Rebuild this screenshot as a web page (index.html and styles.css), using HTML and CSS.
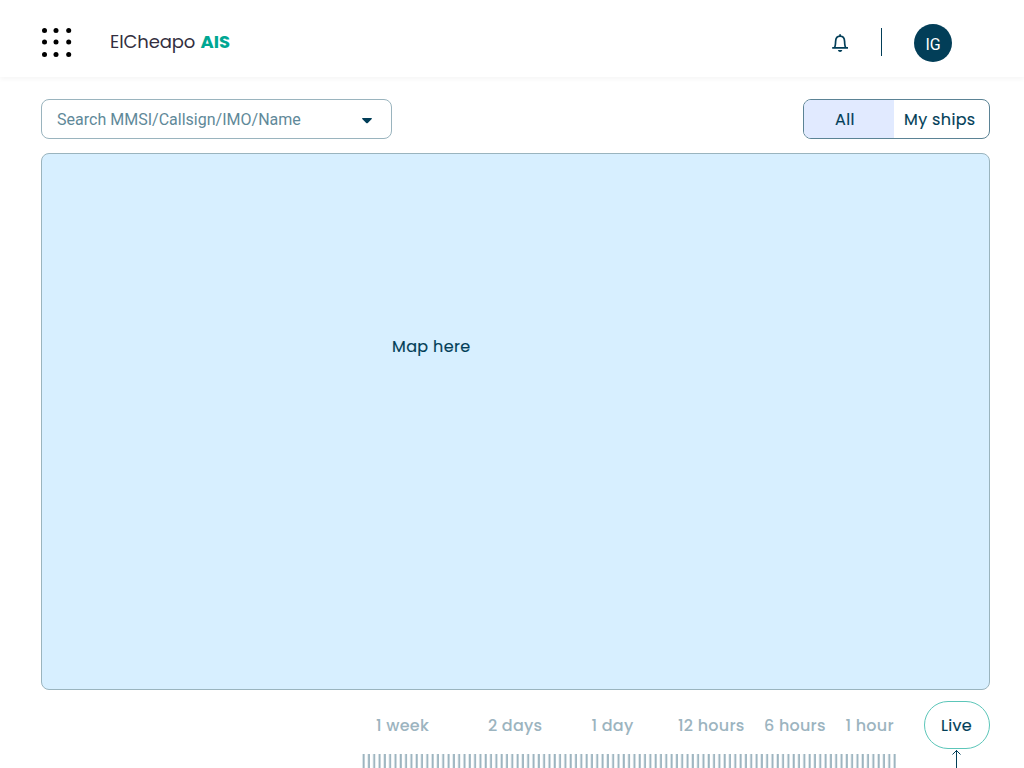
FILE: index.html
```html
<!DOCTYPE html>
<html lang="en">
<head>
<meta charset="utf-8">
<title>ElCheapo AIS</title>
<link rel="stylesheet" href="styles.css">
</head>
<body>
<header class="header">
  <svg class="apps" viewBox="0 0 30 30"><g><circle cx="2.5" cy="2.5" r="2.5"/><circle cx="14" cy="2.5" r="2.5"/><circle cx="26.7" cy="2.5" r="2.5"/><circle cx="2.5" cy="14" r="2.5"/><circle cx="14" cy="14" r="2.5"/><circle cx="26.7" cy="14" r="2.5"/><circle cx="2.5" cy="26.6" r="2.5"/><circle cx="14" cy="26.6" r="2.5"/><circle cx="26.7" cy="26.6" r="2.5"/></g></svg>
  <h1 class="brand"><span class="brand-name">ElCheapo</span><b class="brand-tag">AIS</b></h1>
  <svg class="bell" viewBox="0 0 18 20"><path d="M1.200 14.900H17M3.400 14.800C4.400 13.500 4.500 12 4.600 8.500C4.700 5.300 6.300 3.200 9.100 3.200S13.500 5.300 13.600 8.500C13.700 12 13.800 13.500 14.800 14.800M9.100 3V1.300"/><path class="clapper" d="M6.800 17H11.400Q10.800 19 9.100 19T6.800 17Z"/></svg>
  <span class="divider"></span>
  <span class="avatar">IG</span>
</header>
<main class="page">
  <div class="toolbar">
    <div class="search"><span class="placeholder">Search MMSI/Callsign/IMO/Name</span><svg class="caret" viewBox="0 0 10 6"><path d="M0.500 0H9.500Q10.300 0.500 9.500 1.200L5.800 5Q5 5.700 4.200 5L0.500 1.200Q-0.300 0.500 0.500 0Z"/></svg></div>
    <div class="toggle"><span class="option option-active">All</span><span class="option">My ships</span></div>
  </div>
  <section class="map">Map here</section>
  <div class="timeline">
    <div class="scale">
      <div class="labels"><span>1 week</span><span>2 days</span><span>1 day</span><span>12 hours</span><span>6 hours</span><span>1 hour</span></div>
      <svg class="ticks" viewBox="0 0 535 14"><defs><pattern id="tick" width="5.310" height="14" patternUnits="userSpaceOnUse"><rect x="0.600" width="2" height="14"/></pattern></defs><rect width="534.500" height="14" fill="url(#tick)"/></svg>
    </div>
    <div class="live-column">
      <span class="live">Live</span>
      <svg class="arrow" viewBox="0 0 10 18"><path d="M5.500 0V18M1.500 4.500L5.500 0.500L9.500 4.500"/></svg>
    </div>
  </div>
</main>
</body>
</html>
```
FILE: styles.css
```css
* { box-sizing: border-box; }
html, body { height: 100%; overflow: hidden; }
body { margin: 0; background: #fff; color: #023e58; font: 400 16px/24px Poppins, Inter, sans-serif; font-feature-settings: "cv11" 1; letter-spacing: .35px; -webkit-text-stroke: .15px currentColor; white-space: nowrap; }
svg { display: block; flex: none; }
.header { height: 77px; padding-left: 42px; display: flex; align-items: flex-start; box-shadow: 0 3px 4px rgba(0, 0, 0, .03); -webkit-text-stroke: 0; }
.apps { width: 30px; height: 30px; margin-top: 28px; fill: #000; }
.brand { width: 722px; margin: 28px 0 0 38px; display: flex; font-size: 18px; line-height: 28px; font-weight: 400; letter-spacing: -.1px; }
.brand-name { width: 90.5px; color: #332f40; }
.brand-tag { color: #00a793; font-weight: 700; letter-spacing: -.1px; }
.bell { width: 18px; height: 20px; margin-top: 33px; margin-left: -1px; fill: none; stroke: #023e58; stroke-width: 1.7; }
.clapper { fill: #023e58; stroke: none; }
.divider { width: 1px; height: 28px; margin: 28px 0 0 32px; background: #023e58; }
.avatar { width: 38px; height: 38px; margin: 24px 0 0 32px; border-radius: 50%; background: #023e58; color: #fff; font: 400 16px/41px Roboto, sans-serif; letter-spacing: 0; text-align: center; }
.page { padding: 22px 34px 0 41px; }
.toolbar { display: flex; justify-content: space-between; height: 40px; }
.search { width: 351px; padding: 0 19px 0 15px; display: flex; align-items: center; justify-content: space-between; border: 1px solid #9ab4be; border-radius: 8px; }
.placeholder { padding-top: 2px; color: #5f8999; font: 400 16px/24px Roboto, sans-serif; letter-spacing: 0.01px; -webkit-text-stroke: 0; }
.caret { width: 10px; height: 6px; margin-top: 3px; fill: #023e58; }
.toggle { width: 187px; display: flex; overflow: hidden; border: 1px solid #5b8395; border-radius: 8px; }
.option { flex: 1; padding-left: 10px; line-height: 39px; }
.option-active { flex: 0 0 90px; padding-left: 31px; background: #e1eaff; }
.map { height: 537px; margin-top: 14px; padding: 181px 0 0 350px; border: 1px solid #9ab4be; border-radius: 8px; background: #d7efff; }
.timeline { height: 78px; display: flex; padding: 11px 0 0 321px; justify-content: space-between; }
.scale { width: 535px; }
.labels { height: 53px; padding: 13px 0 0 14px; display: grid; grid-template-columns: 112px 103.5px 86.5px 86px 81.5px 50px; color: #9cb4bf; font-weight: 500; letter-spacing: .24px; -webkit-text-stroke: 0; }
.ticks { width: 535px; height: 14px; }
#tick rect { fill: #9cb4bf; }
.live-column { width: 66px; }
.live { height: 48px; padding-left: 16px; display: block; border: 1px solid #5cc6b9; border-radius: 24px; line-height: 47px; }
.arrow { width: 10px; height: 18px; margin: 1px 0 0 27px; fill: none; stroke: #023e58; }
```
